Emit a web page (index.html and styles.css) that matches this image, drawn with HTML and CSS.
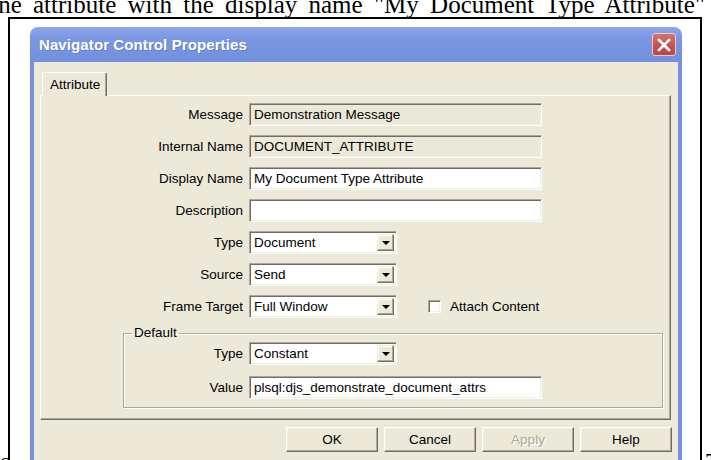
FILE: index.html
```html
<!DOCTYPE html>
<html>
<head>
<meta charset="utf-8">
<title>Navigator Control Properties</title>
<link rel="stylesheet" href="styles.css">
</head>
<body>
<div class="lead"><span>ne attribute with the display name "My Document Type Attribute"</span></div>
<div class="page-row">
  <div class="gutter gutter-left"><span>c</span></div>
  <div class="figure">
    <div class="window">
      <div class="titlebar">
        <span class="title">Navigator Control Properties</span>
        <span class="close">
          <svg width="14" height="14" viewBox="0 0 14 14"><path d="M2 2 L12 12 M12 2 L2 12" stroke="#fff" stroke-width="2.6" stroke-linecap="square"/></svg>
        </span>
      </div>
      <div class="client">
        <div class="tabs"><div class="tab">Attribute</div></div>
        <div class="panel">
          <div class="form main-form">
            <label class="lbl">Message</label>
            <div class="field disabled">Demonstration Message</div>

            <label class="lbl">Internal Name</label>
            <div class="field disabled">DOCUMENT_ATTRIBUTE</div>

            <label class="lbl">Display Name</label>
            <div class="field">My Document Type Attribute</div>

            <label class="lbl">Description</label>
            <div class="field"></div>

            <label class="lbl">Type</label>
            <div class="combo"><span class="combo-text">Document</span><span class="drop"><i></i></span></div>

            <label class="lbl">Source</label>
            <div class="combo"><span class="combo-text">Send</span><span class="drop"><i></i></span></div>

            <label class="lbl">Frame Target</label>
            <div class="field-line">
              <div class="combo"><span class="combo-text">Full Window</span><span class="drop"><i></i></span></div>
              <span class="check"><span class="box"></span>Attach Content</span>
            </div>
          </div>
          <fieldset class="group">
            <legend>Default</legend>
            <div class="form group-form">
              <label class="lbl">Type</label>
              <div class="combo"><span class="combo-text">Constant</span><span class="drop"><i></i></span></div>

              <label class="lbl">Value</label>
              <div class="field">plsql:djs_demonstrate_document_attrs</div>
            </div>
          </fieldset>
        </div>
        <div class="buttons">
          <span class="btn">OK</span>
          <span class="btn">Cancel</span>
          <span class="btn off">Apply</span>
          <span class="btn">Help</span>
        </div>
      </div>
    </div>
  </div>
  <div class="gutter gutter-right"><span>7</span></div>
</div>
</body>
</html>
```
FILE: styles.css
```css
* { box-sizing: border-box; }

body {
  margin: 0;
  width: 711px;
  height: 460px;
  overflow: hidden;
  background: #fff;
  font-family: "Liberation Serif", serif;
  color: #000;
}

/* running text of the page, clipped by the top edge */
.lead {
  height: 17px;
  display: flex;
  justify-content: flex-end;
  align-items: flex-end;
  overflow: hidden;
  padding-right: 6px;
  font-size: 25px;
  line-height: 24px;
  word-spacing: 5px;
  white-space: nowrap;
}

.page-row {
  display: flex;
  height: 443px;
}

.gutter {
  display: flex;
  align-items: flex-end;
  overflow: hidden;
  font-size: 22px;
  line-height: 22px;
}
.gutter span { margin-bottom: -12px; }
.gutter-left { width: 8px; }
.gutter-right { width: 9px; padding-left: 3px; }

/* framed figure */
.figure {
  width: 694px;
  border: 2px solid #000;
  border-bottom: none;
  padding: 8px 0 0 20px;
  overflow: hidden;
}

.window {
  width: 652px;
  font-family: "Liberation Sans", Arial, sans-serif;
  font-size: 13.5px;
}

.titlebar {
  height: 35px;
  border-radius: 8px 8px 0 0;
  background: linear-gradient(#8ea8ea, #7b97e2 30%, #7693e0 70%, #7390dd);
  display: flex;
  align-items: center;
  justify-content: space-between;
  padding: 0 6px 0 9px;
}
.title {
  color: #fff;
  font-weight: bold;
  font-size: 15px;
  letter-spacing: 0.1px;
  text-shadow: 1px 1px 0 rgba(60, 80, 150, 0.35);
}
.close {
  width: 24px;
  height: 23px;
  border: 1px solid #eec9c4;
  border-radius: 3px;
  background: linear-gradient(#cf7672, #c0504f 60%, #b84a4a);
  display: flex;
  align-items: center;
  justify-content: center;
}

.client {
  background: #ece9d8;
  border-left: 4px solid #7b8fe0;
  border-right: 4px solid #7b8fe0;
  height: 420px;
}

.tabs {
  padding: 10px 0 0 8px;
  display: flex;
}
.tab {
  position: relative;
  z-index: 1;
  width: 65px;
  height: 24px;
  margin-bottom: -1px;
  background: #ece9d8;
  border-top: 1px solid #fff;
  border-left: 1px solid #fff;
  border-right: 1px solid #716f64;
  box-shadow: inset -1px 0 0 #aca899;
  border-radius: 2px 2px 0 0;
  padding: 4px 0 0 7px;
}

.panel {
  margin: 0 7px 0 6px;
  height: 325px;
  border: 1px solid;
  border-color: #fff #716f64 #716f64 #fff;
  box-shadow: inset -1px -1px 0 #aca899;
  padding-top: 7px;
}

.form {
  display: grid;
  column-gap: 6px;
  align-items: center;
}
.main-form {
  grid-template-columns: 202px auto;
  row-gap: 9px;
}
.group-form {
  grid-template-columns: 119px auto;
  row-gap: 11px;
}

.lbl { text-align: right; white-space: nowrap; }

.field {
  width: 293px;
  height: 23px;
  background: #fff;
  border: 1px solid;
  border-color: #aca899 #fff #fff #aca899;
  box-shadow: inset 1px 1px 0 #716f64, inset -1px -1px 0 #f1efe2;
  padding: 3px 0 0 4px;
  white-space: nowrap;
}
.field.disabled { background: #ece9d8; }

.combo {
  width: 148px;
  height: 23px;
  background: #fff;
  border: 1px solid;
  border-color: #aca899 #fff #fff #aca899;
  box-shadow: inset 1px 1px 0 #716f64, inset -1px -1px 0 #f1efe2;
  display: flex;
  padding: 2px;
}
.combo-text {
  flex: 1;
  padding: 1px 0 0 2px;
}
.drop {
  width: 17px;
  background: #ece9d8;
  border: 1px solid;
  border-color: #f1efe2 #716f64 #716f64 #f1efe2;
  box-shadow: inset -1px -1px 0 #aca899, inset 1px 1px 0 #fff;
  display: flex;
  align-items: center;
  justify-content: center;
}
.drop i {
  width: 0;
  height: 0;
  border-left: 4px solid transparent;
  border-right: 4px solid transparent;
  border-top: 4px solid #000;
  margin-top: 1px;
}

.field-line {
  display: flex;
  align-items: center;
}
.check {
  display: flex;
  align-items: center;
  margin-left: 31px;
  gap: 9px;
}
.box {
  width: 13px;
  height: 13px;
  background: #fff;
  border: 1px solid;
  border-color: #aca899 #fff #fff #aca899;
  box-shadow: inset 1px 1px 0 #716f64, inset -1px -1px 0 #f1efe2;
}

.group {
  margin: 7px 0 0 82px;
  width: 540px;
  padding: 1px 0 8px 0;
  border: 1px solid #aca899;
  box-shadow: inset 1px 1px 0 #fff, 1px 1px 0 #fff;
}
.group legend {
  margin-left: 8px;
  padding: 0 2px;
  line-height: 16px;
}

.buttons {
  display: flex;
  justify-content: flex-end;
  gap: 6px;
  padding-right: 6px;
  margin-top: 7px;
}
.btn {
  width: 92px;
  height: 25px;
  display: flex;
  align-items: center;
  justify-content: center;
  border: 1px solid;
  border-color: #fff #716f64 #716f64 #fff;
  box-shadow: inset -1px -1px 0 #aca899, inset 1px 1px 0 #f1efe2;
}
.btn.off {
  color: #aca899;
  text-shadow: 1px 1px 0 #fff;
}
```
